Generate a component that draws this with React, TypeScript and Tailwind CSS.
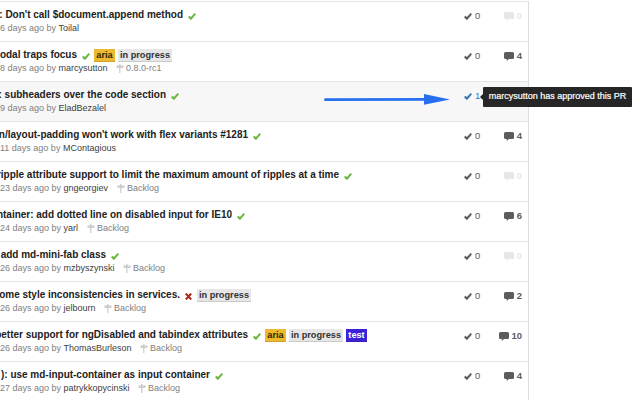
type Label = 'aria' | 'in progress' | 'test';

interface PullRequest {
  title: string;
  titleWidth: number;
  status: 'success' | 'failure';
  labels?: Label[];
  age: string;
  author: string;
  metaWidth: number;
  milestone?: string;
  approvals: number;
  comments: number;
  active?: boolean;
}

const pulls: PullRequest[] = [
  { title: ": Don't call $document.append method", titleWidth: 183, status: 'success', age: '6 days ago by', author: 'Toilal', metaWidth: 80, approvals: 0, comments: 0 },
  { title: 'odal traps focus', titleWidth: 77, status: 'success', labels: ['aria', 'in progress'], age: '8 days ago by', author: 'marcysutton', metaWidth: 107, milestone: '0.8.0-rc1', approvals: 0, comments: 4 },
  { title: ': subheaders over the code section', titleWidth: 166, status: 'success', age: '9 days ago by', author: 'EladBezalel', metaWidth: 106, approvals: 1, comments: 1, active: true },
  { title: "n/layout-padding won't work with flex variants #1281", titleWidth: 248, status: 'success', age: '11 days ago by', author: 'MContagious', metaWidth: 116, approvals: 0, comments: 4 },
  { title: 'ripple attribute support to limit the maximum amount of ripples at a time', titleWidth: 339, status: 'success', age: '23 days ago by', author: 'gngeorgiev', metaWidth: 108, milestone: 'Backlog', approvals: 0, comments: 0 },
  { title: 'ntainer: add dotted line on disabled input for IE10', titleWidth: 232, status: 'success', age: '24 days ago by', author: 'yarl', metaWidth: 78, milestone: 'Backlog', approvals: 0, comments: 6 },
  { title: 'add md-mini-fab class', titleWidth: 106, status: 'success', age: '26 days ago by', author: 'mzbyszynski', metaWidth: 114, milestone: 'Backlog', approvals: 0, comments: 0 },
  { title: 'ome style inconsistencies in services.', titleWidth: 180, status: 'failure', labels: ['in progress'], age: '26 days ago by', author: 'jelbourn', metaWidth: 95, milestone: 'Backlog', approvals: 0, comments: 2 },
  { title: 'better support for ngDisabled and tabindex attributes', titleWidth: 248, status: 'success', labels: ['aria', 'in progress', 'test'], age: '26 days ago by', author: 'ThomasBurleson', metaWidth: 131, milestone: 'Backlog', approvals: 0, comments: 10 },
  { title: '): use md-input-container as input container', titleWidth: 210, status: 'success', age: '27 days ago by', author: 'patrykkopycinski', metaWidth: 129, milestone: 'Backlog', approvals: 0, comments: 4 },
];

const labelStyles: Record<Label, string> = {
  aria: 'w-[21px] bg-[#edb92e] text-[#332500]',
  'in progress': 'w-[54px] bg-[#e6e6e6] text-[#333333]',
  test: 'w-[21px] bg-[#3b22d6] text-white',
};

function Check({ className }: { className: string }) {
  return (
    <svg viewBox="0 0 8 7" className={`h-[7px] w-2 shrink-0 ${className}`} fill="currentColor">
      <path d="M6.6 0 8 1.3 3.4 6.7H2.4L0 4.2 1.4 2.7 2.9 4Z" />
    </svg>
  );
}

function Cross() {
  return (
    <svg viewBox="0 0 7 7" className="h-[7px] w-[7px] shrink-0 text-[#a82a1c]" fill="none" stroke="currentColor" strokeWidth="2">
      <path d="M.8.5 6.2 6.5M6.2.5.8 6.5" />
    </svg>
  );
}

function Milestone() {
  return (
    <svg viewBox="0 0 8 9" className="h-[9px] w-2 shrink-0 text-[#c4c4c4]" fill="currentColor">
      <path d="M3.2 0h1.2v1.2h2.3L8 2.6 6.7 4H4.4v5H3.2V4H.6V1.2h2.6Z" opacity=".9" />
      <path d="M1.7 2.2h1M5 2.2h1" stroke="white" strokeWidth=".7" />
    </svg>
  );
}

function Comment() {
  return (
    <svg viewBox="0 0 10 9" className="h-[9px] w-[10px] shrink-0" fill="currentColor">
      <path d="M1.5 0h7Q10 0 10 1.5v4Q10 7 8.5 7H5L2.8 9V7H1.5Q0 7 0 5.5v-4Q0 0 1.5 0Z" />
    </svg>
  );
}

function Row({ pull }: { pull: PullRequest }) {
  return (
    <li className={`flex h-10 border-t border-[#e5e5e5] ${pull.active ? 'bg-[#f7f7f7]' : 'bg-white'}`}>
      <div className="min-w-0 flex-1 pt-[7px]">
        <div className="flex h-[13px] items-center">
          <div className="flex h-[13px] shrink-0 justify-end text-[10px] leading-[11px] font-bold tracking-[-0.01px] whitespace-nowrap text-[#222222]" style={{ width: pull.titleWidth }}>
            <span>{pull.title}</span>
          </div>
          <span className="mt-[2px] ml-[5px] flex w-2">
            {pull.status === 'success' ? <Check className="text-[#6cb644]" /> : <Cross />}
          </span>
          <div className="ml-1 flex gap-[3px]">
            {pull.labels?.map((label) => (
              <span key={label} className={`flex h-[13px] justify-center text-[9.2px] leading-[12px] font-bold whitespace-nowrap shadow-[inset_0_-1px_0_rgba(0,0,0,0.12)] ${labelStyles[label]}`}>
                {label}
              </span>
            ))}
          </div>
        </div>
        <div className="flex h-[13px] items-center text-[9px] leading-[13px] whitespace-nowrap text-[#808080]">
          <div className="flex shrink-0 gap-[2.5px]" style={{ width: pull.metaWidth }}>
            <span>{pull.age}</span>
            <span className="text-[#404040]">{pull.author}</span>
          </div>
          {pull.milestone && (
            <div className="ml-[8.5px] flex items-center gap-[2.5px]">
              <Milestone />
              <span>{pull.milestone}</span>
            </div>
          )}
        </div>
      </div>
      <div className={`mt-2 flex h-[13px] w-4 items-center gap-[3px] text-[9.5px] ${pull.active ? 'text-[#3d76b8]' : 'text-[#5c5c5c]'}`}>
        <Check className="" />
        <span>{pull.approvals}</span>
      </div>
      <div className={`mt-2 mr-[6px] flex h-[13px] w-[42px] items-center justify-end gap-[2.5px] text-[9.5px] font-bold ${pull.comments ? 'text-[#5c5c5c]' : 'text-[#e7e7e7]'}`}>
        <Comment />
        <span>{pull.comments}</span>
      </div>
    </li>
  );
}

export default function App() {
  return (
    <div className="relative h-[400px] w-[640px] overflow-hidden bg-white pt-px font-['Liberation_Sans',Arial,sans-serif]">
      <ul className="w-[529px] border-r border-[#dddddd]">
        {pulls.map((pull) => (
          <Row key={pull.title} pull={pull} />
        ))}
      </ul>
      <svg viewBox="0 0 130 12" className="absolute top-[94px] left-[322px] h-3 w-[130px]">
        <path d="M3.5 5.7 105 5.4" stroke="#286ff0" strokeWidth="2.8" strokeLinecap="round" />
        <path d="M102 0 128 5.5 102 10.8Z" fill="#286ff0" />
      </svg>
      <div className="absolute top-[87px] left-[483px] flex h-5 w-[149px] items-center justify-center rounded-[1px] bg-[#222222]/98 text-[9px] whitespace-nowrap text-white [-webkit-text-stroke:0.2px_white]">
        <span className="absolute top-[7px] -left-[3px] border-y-[3px] border-r-[3px] border-y-transparent border-r-[#222222]" />
        <span>marcysutton has approved this PR</span>
      </div>
    </div>
  );
}
